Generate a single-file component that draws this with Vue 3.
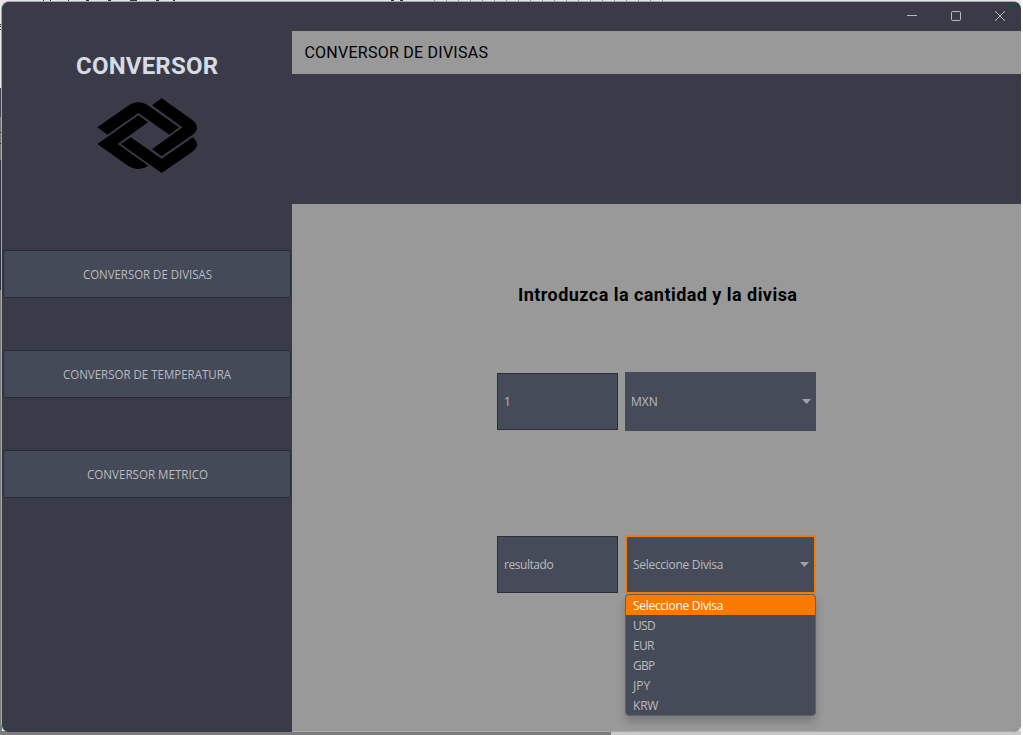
<script setup>
const sections = [
  { label: 'CONVERSOR DE DIVISAS', w: 129 },
  { label: 'CONVERSOR DE TEMPERATURA', w: 168 },
  { label: 'CONVERSOR METRICO', w: 121 },
]
const currencies = ['Seleccione Divisa', 'USD', 'EUR', 'GBP', 'JPY', 'KRW']
</script>

<template>
  <div class="desktop">
    <svg class="behind" width="1021" height="735" shape-rendering="crispEdges">
      <rect width="1021" height="735" fill="#e8e8e8" />
      <rect y="88" width="2" height="29" fill="#44464f" />
      <rect y="117" width="2" height="43" fill="#777" />
      <rect y="160" width="2" height="130" fill="#30323c" />
      <rect y="290" width="2" height="445" fill="#7c7c7c" />
      <path d="M0 24h1v1h-1zM0 26h1v1h-1zM0 29h1v1h-1zM0 132h1v1h-1zM0 143h1v1h-1z" fill="#222" />
      <path d="M43 0h1v1h-1zM50 0h1v1h-1zM68 0h1v1h-1zM86 0h3v1h-3zM108 0h3v1h-3zM130 0h7v1h-7zM156 0h3v1h-3zM173 0h2v1h-2zM391 0h3v1h-3zM400 0h3v1h-3z" fill="#333" />
      <path d="M434 .5H670" stroke="#888" stroke-dasharray="1 11" />
      <rect y="731" width="611" height="4" fill="#7c7c7c" />
      <rect x="611" y="731" width="410" height="4" fill="#c8c8c8" />
    </svg>
    <div class="window">
      <aside class="side">
        <h1 class="brand"><svg width="144" height="32"><text x="1" y="24" textLength="142">CONVERSOR</text></svg></h1>
        <svg class="logo" width="102" height="77" viewBox="291 293 306 231">
          <path d="M292 381 382 318Q415 294 448 318L537 381 508 403 415 338 322 403Z" />
          <path d="M456 315 485 294 576 358Q606 381 576 405L485 468 456 447 547 381Z" />
          <path d="M292 431 415 345 444 366 353 431 445 496Q415 517 382 495Z" />
          <path d="M362 431 392 411 485 475 578 411Q605 434 576 455L485 518Z" />
        </svg>
        <nav class="nav">
          <button v-for="s in sections" :key="s.label" class="nav-btn">
            <svg width="200" height="20"><text :x="100 - s.w / 2 + (s.w % 2 ? 0.5 : 0)" y="15" :textLength="s.w" lengthAdjust="spacingAndGlyphs">{{ s.label }}</text></svg>
          </button>
        </nav>
      </aside>
      <main class="main">
        <div class="controls">
          <svg width="100" height="12" viewBox="0 0 100 12" fill="none" stroke="#b9bbbd">
            <path d="M0 5.5H10" />
            <rect x="44.5" y="1.5" width="9" height="9" rx="1" />
            <path d="M88 1 98 11M98 1 88 11" />
          </svg>
        </div>
        <div class="heading"><svg width="200" height="24"><text x="0.4" y="18" textLength="183.5">CONVERSOR DE DIVISAS</text></svg></div>
        <div class="band"></div>
        <section class="content">
          <h2 class="prompt"><svg width="290" height="28"><text x="0" y="20" textLength="279">Introduzca la cantidad y la divisa</text></svg></h2>
          <div class="row">
            <div class="field">1</div>
            <div class="select">
              <span>MXN</span>
              <svg class="arrow" width="9" height="5"><path d="M0 0H9L4.5 5Z" /></svg>
            </div>
          </div>
          <div class="row second">
            <div class="field tight">resultado</div>
            <div class="select active">
              <span class="tight">Seleccione Divisa</span>
              <svg class="arrow" width="9" height="5"><path d="M0 0H9L4.5 5Z" /></svg>
              <ul class="menu">
                <li v-for="(c, i) in currencies" :key="c" :class="{ chosen: i === 0 }">{{ c }}</li>
              </ul>
            </div>
          </div>
        </section>
      </main>
    </div>
  </div>
</template>

<style>
body { margin: 0; background: #fff; overflow: hidden; }
</style>

<style scoped>
* { box-sizing: border-box; }
.desktop { position: relative; width: 1021px; height: 735px; padding: 1px 0 0 1px; font: 12px "Open Sans", "Noto Sans", sans-serif; color: #b9bbbd; }
.behind { position: absolute; left: 0; top: 0; }
.window { position: relative; display: flex; width: 1021px; height: 731px; border: 1px solid #35e0ad; border-right: 0; border-bottom: 0; border-radius: 8px; background: #393b49; overflow: hidden; clip-path: inset(0 1px 0 0 round 8px); }
.side { width: 290px; flex: none; display: flex; flex-direction: column; align-items: center; background: #393b49; }
.brand { margin: 48px 0 0; height: 32px; font: 700 24px/32px Roboto, sans-serif; fill: #d6dbe6; }
.logo { margin: 16px 0 0 2px; fill: #000; }
.nav { width: 286px; margin-top: 75px; display: flex; flex-direction: column; gap: 52px; }
.nav-btn { height: 48px; width: 288px; margin-left: -1px; padding: 0; border: 1px solid #2a2c3a; border-radius: 3px; background: #454a58; font: 12px "Open Sans", sans-serif; display: flex; align-items: center; justify-content: center; }
.nav-btn svg { fill: #b9bbbd; }
.main { flex: 1; display: flex; flex-direction: column; }
.controls { height: 29px; flex: none; display: flex; justify-content: flex-end; padding: 8px 15px 0 0; }
.heading { height: 43px; flex: none; background: #999; padding: 9px 0 0 12px; font: 16px Roboto, sans-serif; }
.band { height: 130px; flex: none; }
.content { flex: 1; background: #999; display: flex; flex-direction: column; padding-left: 205px; border-bottom: 1px solid #aaa; }
.prompt { margin: 77px 0 0 21px; height: 28px; font: 700 18px Roboto, sans-serif; color: #000; }
.row { display: flex; gap: 7px; margin-top: 63px; align-items: center; }
.row.second { margin-top: 104px; }
.field { width: 121px; height: 57px; border: 1px solid #2b2d3b; background: #464b59; padding-left: 6px; line-height: 55px; }
.select { position: relative; width: 191px; height: 59px; background: #464b59; display: flex; align-items: center; justify-content: space-between; padding: 0 5px 0 6px; }
.select.active { border: 2px solid #f87a00; border-radius: 2px; padding-left: 6px; }
.tight { letter-spacing: -.3px; }
.field.tight { letter-spacing: -.45px; }
.arrow { fill: #a0a1a2; }
.menu { position: absolute; left: -2px; top: 57px; width: 191px; height: 122px; margin: 0; padding: 0; list-style: none; border: 1px solid #606266; border-radius: 4px; background: #464b59; overflow: hidden; box-shadow: 0 6px 10px rgba(0, 0, 0, .2); }
.menu li { height: 20px; line-height: 21px; padding-left: 7px; letter-spacing: -.7px; }
.menu li:nth-child(5) { letter-spacing: 0; }
.menu li:last-child { letter-spacing: -.2px; }
.menu li.chosen { background: #f87a00; color: #fff; letter-spacing: -.3px; }
</style>
